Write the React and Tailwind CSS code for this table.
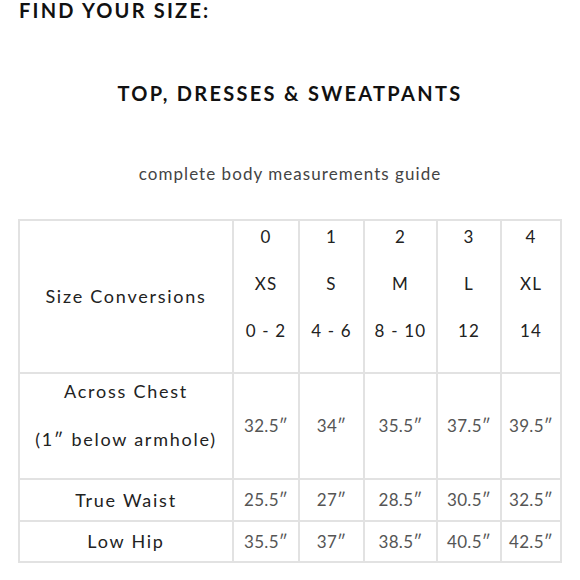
export default function App() {
  const font = { fontFamily: 'Lato, "Noto Sans", sans-serif' };
  const cell = "bg-white flex items-center justify-center text-center";
  const val = "text-[#555] text-[17px] tracking-[0.3px]";
  const lab = "text-[#222] text-[18px] tracking-[1.75px]";
  return (
    <div className="w-[580px] h-[580px] bg-white overflow-hidden relative" style={font}>
      <div className="pl-[19px] text-[20px] leading-[20px] font-bold tracking-[2.2px] text-[#111]">
        FIND YOUR SIZE:
      </div>
      <div className="mt-[63px] text-center text-[20px] leading-[20px] font-bold tracking-[2.3px] text-[#111]">
        TOP, DRESSES &amp; SWEATPANTS
      </div>
      <div className="mt-[61px] text-center text-[17px] leading-[20px] tracking-[1.05px] text-[#444]">
        complete body measurements guide
      </div>
      <div className="ml-[18px] mt-[35px] w-[544px] grid grid-cols-[212px_64px_63px_71px_62px_58px] grid-rows-[151px_104px_40px_39px] gap-[2px] p-[2px] bg-[#e2e2e2]">
        <div className={`${cell} ${lab}`}>Size Conversions</div>
        {[["0", "XS", "0 - 2"], ["1", "S", "4 - 6"], ["2", "M", "8 - 10"], ["3", "L", "12"], ["4", "XL", "14"]].map((c, i) => (
          <div key={i} className="bg-white flex flex-col items-center pt-[6px] gap-[27px] text-[#222] text-[17px] tracking-[1.2px]">
            {c.map((t, j) => (
              <div key={j} className="h-[20px] leading-[20px] whitespace-nowrap">{t}</div>
            ))}
          </div>
        ))}
        <div className={`bg-white flex flex-col items-center pt-[7px] gap-[28px] ${lab}`}>
          <div className="h-[20px] leading-[20px] whitespace-nowrap">Across Chest</div>
          <div className="h-[20px] leading-[20px] whitespace-nowrap">(1″ below armhole)</div>
        </div>
        {["32.5″", "34″", "35.5″", "37.5″", "39.5″"].map((t, i) => (
          <div key={i} className={`${cell} ${val}`}>{t}</div>
        ))}
        <div className={`${cell} ${lab}`}>True Waist</div>
        {["25.5″", "27″", "28.5″", "30.5″", "32.5″"].map((t, i) => (
          <div key={i} className={`${cell} ${val}`}>{t}</div>
        ))}
        <div className={`${cell} ${lab}`}>Low Hip</div>
        {["35.5″", "37″", "38.5″", "40.5″", "42.5″"].map((t, i) => (
          <div key={i} className={`${cell} ${val}`}>{t}</div>
        ))}
      </div>
    </div>
  );
}
